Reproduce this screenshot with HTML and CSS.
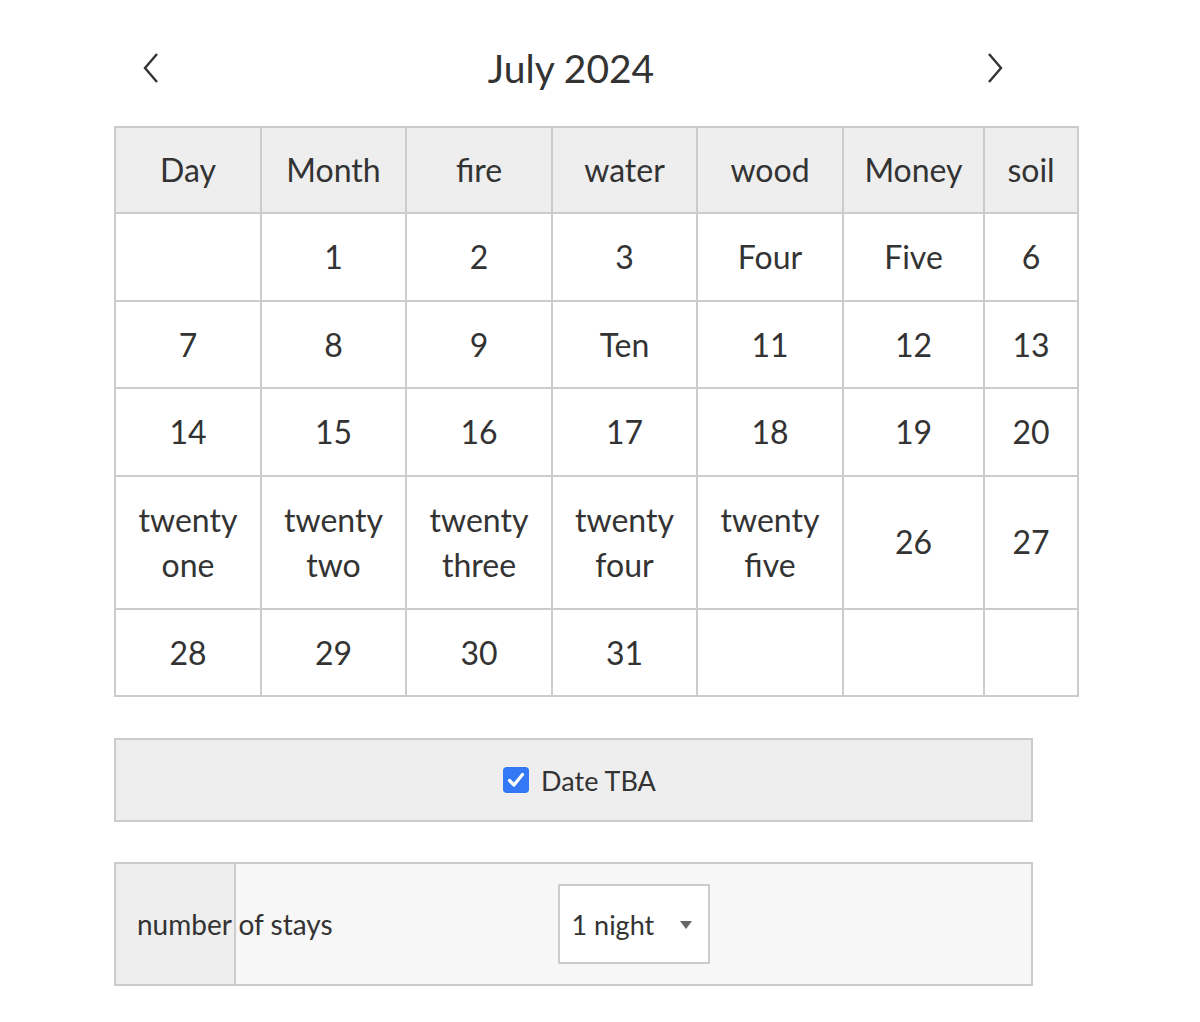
FILE: index.html
```html
<!DOCTYPE html>
<html lang="en">
<head>
<meta charset="utf-8">
<title>Calendar</title>
<link rel="stylesheet" href="styles.css">
</head>
<body>
<div class="page">
  <div class="cal-header">
    <button class="nav-btn nav-prev" aria-label="Previous month">
      <svg width="18" height="32" viewBox="0 0 18 32"><polyline points="15,2 3,16 15,30" fill="none" stroke="#333" stroke-width="2.4" stroke-linejoin="miter"/></svg>
    </button>
    <div class="cal-title">July 2024</div>
    <button class="nav-btn nav-next" aria-label="Next month">
      <svg width="18" height="32" viewBox="0 0 18 32"><polyline points="3,2 15,16 3,30" fill="none" stroke="#333" stroke-width="2.4" stroke-linejoin="miter"/></svg>
    </button>
  </div>

  <table class="cal">
    <colgroup>
      <col class="c1"><col class="c2"><col class="c3"><col class="c4"><col class="c5"><col class="c6"><col class="c7">
    </colgroup>
    <thead>
      <tr><th>Day</th><th>Month</th><th>fire</th><th>water</th><th>wood</th><th>Money</th><th>soil</th></tr>
    </thead>
    <tbody>
      <tr><td></td><td>1</td><td>2</td><td>3</td><td>Four</td><td>Five</td><td>6</td></tr>
      <tr><td>7</td><td>8</td><td>9</td><td>Ten</td><td>11</td><td>12</td><td>13</td></tr>
      <tr><td>14</td><td>15</td><td>16</td><td>17</td><td>18</td><td>19</td><td>20</td></tr>
      <tr><td>twenty one</td><td>twenty two</td><td>twenty three</td><td>twenty four</td><td>twenty five</td><td>26</td><td>27</td></tr>
      <tr><td>28</td><td>29</td><td>30</td><td>31</td><td></td><td></td><td></td></tr>
    </tbody>
  </table>

  <div class="tba">
    <label class="tba-label">
      <span class="check" role="checkbox" aria-checked="true">
        <svg width="26" height="26" viewBox="0 0 26 26"><rect x="0" y="0" width="26" height="26" rx="4" fill="#3478f6"/><polyline points="6.5,13.5 11,18 19.5,7.5" fill="none" stroke="#fff" stroke-width="3.2" stroke-linecap="round" stroke-linejoin="round"/></svg>
      </span>
      <span class="tba-text">Date TBA</span>
    </label>
  </div>

  <div class="stays">
    <div class="stays-th">number of stays</div>
    <div class="stays-td">
      <div class="select">
        <span class="select-text">1 night</span>
        <span class="select-arrow"></span>
      </div>
    </div>
  </div>
</div>
</body>
</html>
```

FILE: styles.css
```css
html, body {
  margin: 0;
  padding: 0;
  background: #fff;
}
body {
  font-family: "Lato", "Noto Sans", sans-serif;
  color: #333;
}
.page {
  padding: 28px 0 40px 114px;
}
.cal-header {
  width: 920px;
  height: 80px;
  display: flex;
  align-items: center;
  justify-content: space-between;
}
.nav-btn {
  background: none;
  border: 0;
  padding: 0;
  margin: 0;
  width: 80px;
  height: 80px;
  display: flex;
  align-items: center;
  cursor: pointer;
}
.nav-prev {
  justify-content: flex-start;
  padding-left: 28px;
}
.nav-next {
  justify-content: flex-end;
  padding-right: 30px;
}
.cal-title {
  font-size: 39px;
  line-height: 50px;
  margin-right: 6px;
}
.cal {
  margin-top: 18px;
  border-collapse: collapse;
  table-layout: fixed;
  width: 965px;
  border: 2px solid #ccc;
}
.c1 { width: 146px; }
.c2 { width: 145px; }
.c3 { width: 146px; }
.c4 { width: 145px; }
.c5 { width: 146px; }
.c6 { width: 141px; }
.c7 { width: 94px; }
.cal th, .cal td {
  border: 2px solid #ccc;
  font-size: 32px;
  line-height: 45.5px;
  padding: 20px 6px;
  text-align: center;
  vertical-align: middle;
  font-weight: normal;
}
.cal th {
  background: #eee;
  padding-top: 19px;
  padding-bottom: 19.5px;
}
.tba {
  margin-top: 41px;
  width: 915px;
  height: 80px;
  border: 2px solid #ccc;
  background: #eee;
  display: flex;
  align-items: center;
  justify-content: center;
}
.tba-label {
  display: flex;
  align-items: center;
  gap: 12px;
  font-size: 27px;
  margin-left: 12px;
}
.check {
  display: block;
  width: 26px;
  height: 26px;
}
.check svg { display: block; }
.stays {
  margin-top: 40px;
  width: 915px;
  border: 2px solid #ccc;
  background: #f7f7f7;
  display: flex;
}
.stays-th {
  width: 97px;
  flex: none;
  background: #eee;
  border-right: 2px solid #ccc;
  padding-left: 21px;
  white-space: nowrap;
  font-size: 28px;
  display: flex;
  align-items: center;
}
.stays-td {
  flex: 1;
  display: flex;
  justify-content: center;
  align-items: center;
  padding: 20px 0;
}
.select {
  border: 2px solid #ccc;
  background: #fff;
  display: flex;
  align-items: center;
  padding: 0 0 0 12px;
  box-sizing: border-box;
  width: 152px;
  height: 80px;
  position: relative;
  font-size: 27px;
}
.select-arrow {
  position: absolute;
  right: 16px;
  top: 35px;
  width: 0;
  height: 0;
  border-left: 6px solid transparent;
  border-right: 6px solid transparent;
  border-top: 8px solid #666;
}
```
